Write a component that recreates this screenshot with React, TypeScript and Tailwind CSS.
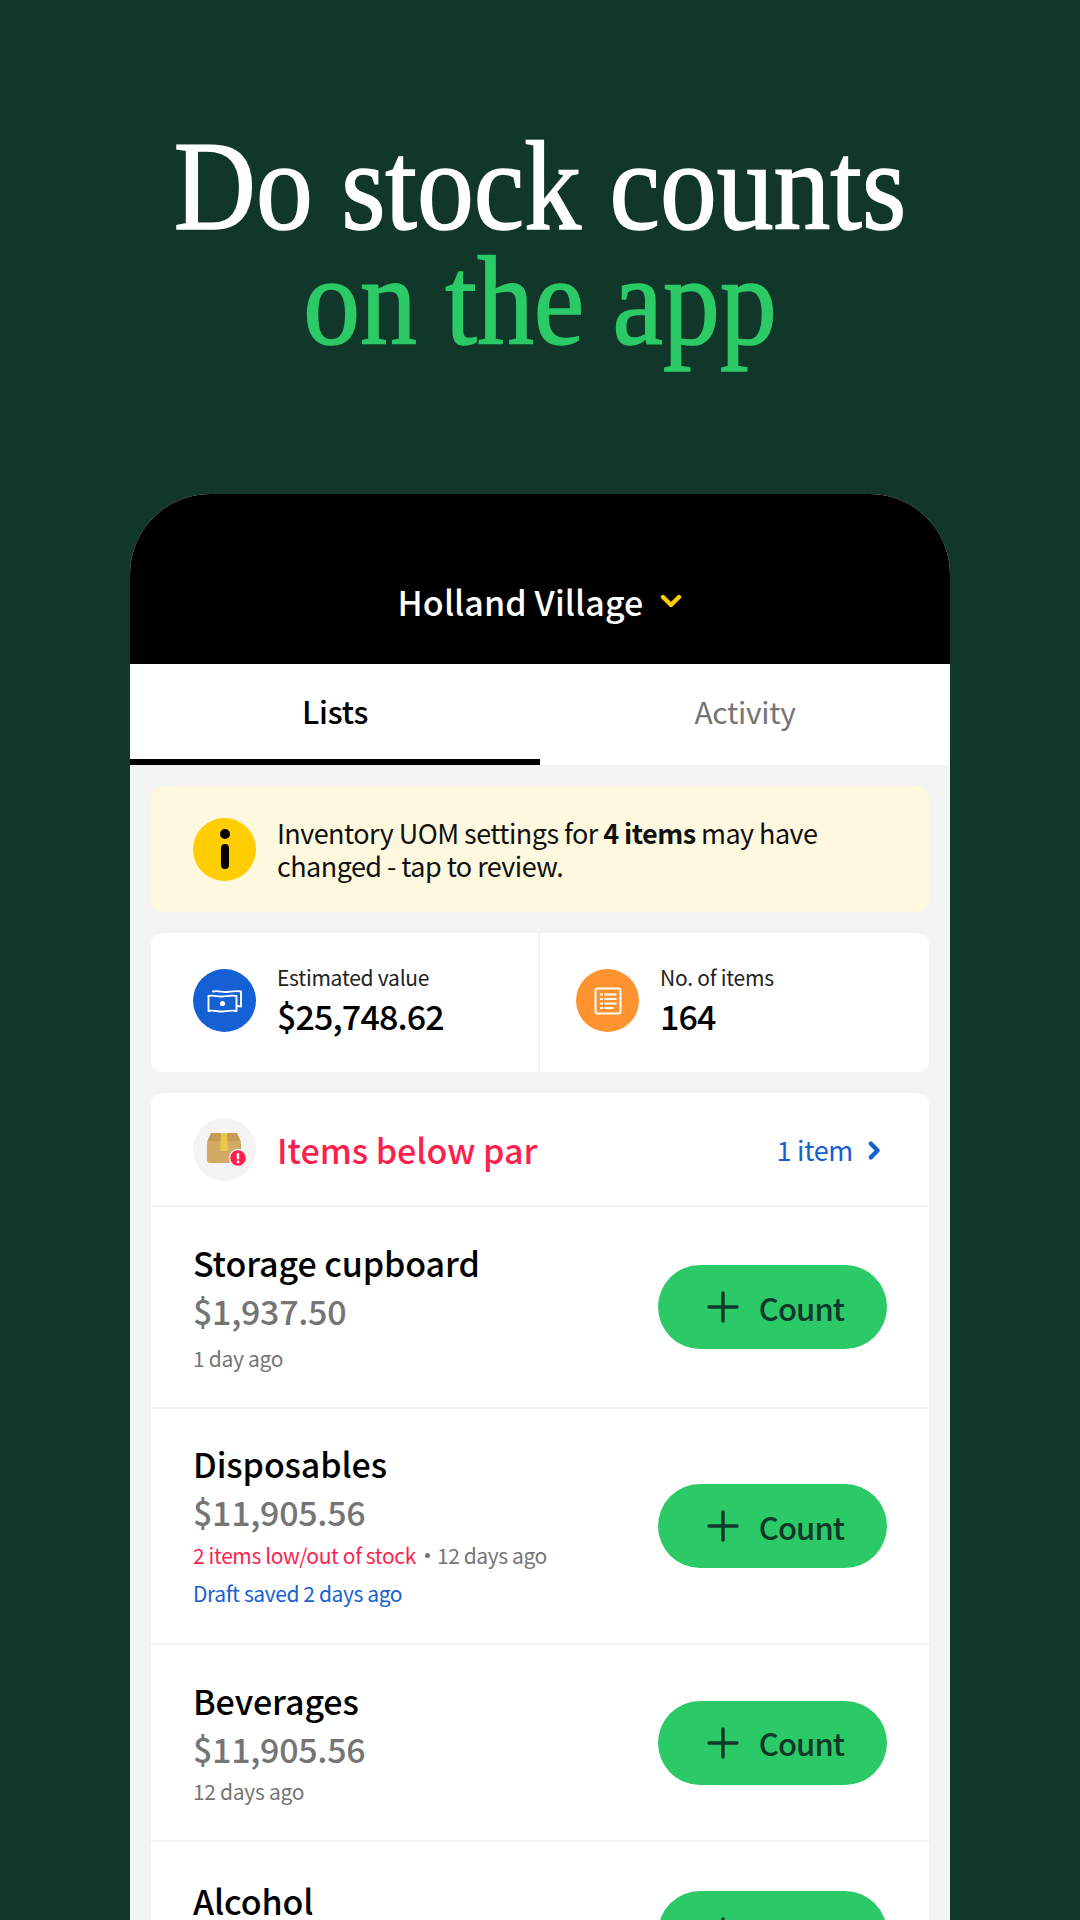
const FONT = { fontFamily: '"Noto Sans CJK SC", "Noto Sans", sans-serif' }

function Chevron({ className }: { className?: string }) {
  return (
    <svg viewBox="0 0 12 16" className={className} fill="none" stroke="currentColor" strokeWidth="3.4" strokeLinecap="round" strokeLinejoin="round">
      <path d="M3 2.5 8.5 8 3 13.5" />
    </svg>
  )
}

function CashIcon() {
  return (
    <svg viewBox="0 0 36 24" className="w-[36px] h-[24px]" fill="none" stroke="white" strokeWidth="1.9" strokeLinejoin="round" strokeLinecap="round">
      <path d="M1.5 7c5-1.3 9 1 14 .5s9-1.5 14-.5v15c-5-1-9 0-14 .5s-9-2-14-.5z" />
      <path d="M6 2.5c5-1.3 9 1 14 .5s9-1.5 14-.5v15l-4-.5" />
      <circle cx="15.5" cy="14.5" r="2.6" fill="white" stroke="none" />
    </svg>
  )
}

function ListIcon() {
  return (
    <svg viewBox="0 0 28 28" className="w-[28px] h-[28px]" fill="none" stroke="white" strokeWidth="2" strokeLinecap="square">
      <rect x="1.5" y="1.5" width="25" height="25" rx="2" />
      <path d="M7 7.5h1M7 12h1M7 16.5h1M7 21h1M11.5 7.5h10M11.5 12h10M11.5 16.5h10M11.5 21h7" />
    </svg>
  )
}

function BoxIcon() {
  return (
    <svg viewBox="0 0 42 36" className="w-[42px] h-[36px] ml-[4px]">
      <path d="M5 2h26l4 9H1z" fill="#c79d55" />
      <rect x="1" y="10" width="34" height="22" rx="3" fill="#d2aa63" />
      <path d="M15 2h6l1 18h-8z" fill="#ecc94b" />
      <circle cx="32" cy="27" r="8.5" fill="#ff1f4f" stroke="#f4f4f4" strokeWidth="1.5" />
      <rect x="30.8" y="22" width="2.4" height="6.5" rx="1.2" fill="white" />
      <circle cx="32" cy="31" r="1.4" fill="white" />
    </svg>
  )
}

function CountButton({ className = '' }: { className?: string }) {
  return (
    <button className={`w-[229px] h-[84px] rounded-full bg-[#2bca66] flex items-center justify-center gap-[20px] pl-[6px] text-[#10372a] shrink-0 ${className}`}>
      <svg viewBox="0 0 32 32" className="w-[32px] h-[32px]" fill="none" stroke="currentColor" strokeWidth="3.4" strokeLinecap="round">
        <path d="M16 2v28M2 16h28" />
      </svg>
      <span className="text-[31px] tracking-[-0.9px] font-medium leading-none">Count</span>
    </button>
  )
}

function Row({ title, price, height, children }: { title: string; price: string; height: string; children?: React.ReactNode }) {
  return (
    <div className={`flex items-center justify-between px-[42px] border-b-2 border-[#f4f4f4] ${height}`}>
      <div>
        <div className="text-[34px] tracking-[-0.1px] font-medium leading-[48px] text-black">{title}</div>
        <div className="text-[34px] tracking-[-0.3px] font-medium leading-[48px] text-[#757575]">{price}</div>
        {children}
      </div>
      <CountButton />
    </div>
  )
}

export default function App() {
  return (
    <div className="w-[1080px] h-[1920px] bg-[#10372a] overflow-hidden" style={FONT}>
      <h1 className="pt-[129px] h-[494px] text-center text-[126px] leading-[115px] text-white scale-x-[0.902] [-webkit-text-stroke:1.6px_currentColor] [font-family:'Liberation_Serif',serif]">
        Do stock counts
        <br />
        <span className="text-[#2bca66]">on the app</span>
      </h1>

      <div className="mx-[130px] rounded-t-[80px] overflow-hidden bg-[#f4f4f4]">
        <div className="h-[170px] bg-black flex items-center justify-center gap-[17px] pt-[44px] text-white">
          <span className="text-[34px] tracking-[0.1px] font-medium">Holland Village</span>
          <svg viewBox="0 0 22 14" className="w-[22px] h-[14px] text-[#ffcd00]" fill="none" stroke="currentColor" strokeWidth="4.4" strokeLinecap="round" strokeLinejoin="round">
            <path d="M3 3l8 8 8-8" />
          </svg>
        </div>

        <div className="h-[101px] bg-white flex">
          <div className="flex-1 flex items-center justify-center border-b-[6px] border-black text-[31px] tracking-[-0.2px] font-medium text-black">Lists</div>
          <div className="flex-1 flex items-center justify-center pb-[6px] text-[30px] tracking-[-0.3px] text-[#757575]">Activity</div>
        </div>

        <div className="px-[21px] pt-[21px] flex flex-col gap-[21px]">
          <div className="h-[126px] rounded-xl bg-[#fef9de] flex items-center gap-[21px] pl-[42px] text-[27px] tracking-[-0.55px] leading-[33px] text-[#111]">
            <div className="w-[63px] h-[63px] rounded-full bg-[#ffcd00] flex flex-col items-center justify-center gap-[5px] shrink-0">
              <div className="w-[10px] h-[10px] rounded-full bg-black" />
              <div className="w-[8px] h-[25px] rounded-full bg-black" />
            </div>
            <div>
              Inventory UOM settings for <b className="font-bold">4 items</b> may have
              <br />
              changed - tap to review.
            </div>
          </div>

          <div className="h-[139px] rounded-xl bg-white flex">
            <div className="w-[389px] flex items-center gap-[21px] pl-[42px] pb-[6px] border-r-2 border-[#f4f4f4]">
              <div className="w-[63px] h-[63px] mt-[2px] rounded-full bg-[#1560d4] flex items-center justify-center"><CashIcon /></div>
              <div>
                <div className="text-[21px] tracking-[-0.25px] leading-[30px] mb-[3px] text-[#222]">Estimated value</div>
                <div className="text-[34px] tracking-[-0.85px] leading-[42px] font-medium text-black">$25,748.62</div>
              </div>
            </div>
            <div className="flex-1 flex items-center gap-[21px] pl-[36px] pb-[6px]">
              <div className="w-[63px] h-[63px] mt-[2px] rounded-full bg-[#ff9330] flex items-center justify-center"><ListIcon /></div>
              <div>
                <div className="text-[21px] tracking-[-0.25px] leading-[30px] mb-[3px] text-[#222]">No. of items</div>
                <div className="text-[34px] tracking-[-0.85px] leading-[42px] font-medium text-black">164</div>
              </div>
            </div>
          </div>

          <div className="rounded-t-xl bg-white">
            <div className="h-[114px] flex items-center pl-[42px] pr-[47px] border-b-2 border-[#f4f4f4]">
              <div className="w-[63px] h-[63px] rounded-full bg-[#f4f4f4] flex items-center justify-center"><BoxIcon /></div>
              <div className="ml-[21px] text-[34px] font-medium text-[#ff1f4f]">Items below par</div>
              <div className="ml-auto pt-[2px] flex items-center gap-[14px] text-[27px] tracking-[-0.3px] text-[#1560d4]">
                1 item
                <Chevron className="w-[15px] h-[21px]" />
              </div>
            </div>

            <Row title="Storage cupboard" price="$1,937.50" height="h-[202px]">
              <div className="text-[21px] tracking-[-0.3px] leading-[36px] mt-[5px] text-[#757575]">1 day ago</div>
            </Row>
            <Row title="Disposables" price="$11,905.56" height="h-[236px]">
              <div className="flex items-center text-[21px] tracking-[-0.4px] leading-[38px] text-[#757575]">
                <span className="text-[#ff1f4f]">2 items low/out of stock</span>
                <span className="ml-[9px] mr-[7px] w-[5px] h-[5px] rounded-full bg-[#757575]" />
                <span>12 days ago</span>
              </div>
              <div className="text-[21px] tracking-[-0.4px] leading-[38px] text-[#1560d4]">Draft saved 2 days ago</div>
            </Row>
            <Row title="Beverages" price="$11,905.56" height="h-[197px]">
              <div className="text-[21px] tracking-[-0.3px] leading-[36px] text-[#757575]">12 days ago</div>
            </Row>
            <div className="flex items-start justify-between px-[42px] h-[140px]">
              <div className="pt-[35px] text-[34px] tracking-[-0.1px] font-medium leading-[48px] text-black">Alcohol</div>
              <CountButton className="mt-[49px]" />
            </div>
          </div>
        </div>
      </div>
    </div>
  )
}
